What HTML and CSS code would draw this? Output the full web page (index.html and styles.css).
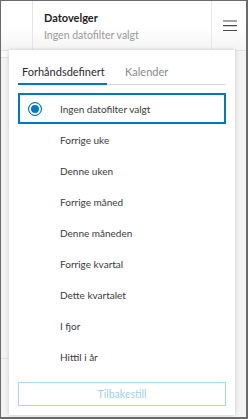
FILE: index.html
```html
<!DOCTYPE html>
<html lang="no">
<head>
<meta charset="utf-8">
<link rel="stylesheet" href="styles.css">
</head>
<body>
<div class="frame">
  <header class="header">
    <div class="cell-left"></div>
    <div class="cell-main">
      <div class="title">Datovelger</div>
      <div class="subtitle">Ingen datofilter valgt</div>
    </div>
    <div class="cell-right">
      <svg width="14" height="12" viewBox="0 0 14 12" class="menu">
        <path d="M0 1H14M0 5.7H14M0 10.5H14" stroke="#4a4a4a" stroke-width="1.2" fill="none"/>
      </svg>
    </div>
  </header>
  <div class="content">
    <div class="bg-row"></div>
    <div class="bg-row bg-row2"></div>
  </div>
  <div class="panel">
    <div class="tabs">
      <div class="tab active">Forhåndsdefinert</div>
      <div class="tab">Kalender</div>
    </div>
    <ul class="options">
      <li class="option selected"><span class="radio"></span>Ingen datofilter valgt</li>
      <li class="option">Forrige uke</li>
      <li class="option">Denne uken</li>
      <li class="option">Forrige måned</li>
      <li class="option">Denne måneden</li>
      <li class="option">Forrige kvartal</li>
      <li class="option">Dette kvartalet</li>
      <li class="option">I fjor</li>
      <li class="option">Hittil i år</li>
    </ul>
    <button class="reset">Tilbakestill</button>
  </div>
</div>
</body>
</html>
```

FILE: styles.css
```css
* { box-sizing: border-box; }
html, body { margin: 0; padding: 0; }
body {
  width: 248px;
  height: 419px;
  overflow: hidden;
  font-family: Lato, "Open Sans", sans-serif;
  background: #6b6b6b;
}
.frame {
  position: relative;
  margin: 1px 2px 2px 1px;
  width: 245px;
  height: 416px;
  background: #f3f3f3;
  display: flex;
  flex-direction: column;
}
.header {
  height: 50px;
  display: flex;
  background: linear-gradient(#ffffff 55%, #f4f4f4);
  border-bottom: 1px solid #e2e2e2;
}
.cell-left {
  width: 32px;
  border-right: 1px solid #e4e4e4;
}
.cell-main {
  flex: 1;
  padding: 9px 0 0 11px;
  border-right: 1px solid #e8e8e8;
}
.title {
  font-size: 11px;
  font-weight: 700;
  color: #1e1e1e;
  line-height: 15px;
}
.subtitle {
  font-size: 10.5px;
  color: #9a9a9a;
  line-height: 15px;
  margin-top: 3px;
}
.cell-right {
  width: 34px;
  display: flex;
  align-items: center;
  justify-content: center;
  padding-left: 1px;
}
.menu { display: block; }
.content {
  flex: 1;
  position: relative;
}
.bg-row {
  height: 7px;
  width: 26px;
  background: #fafafa;
  border-bottom: 1px solid #e2e2e2;
  border-right: 1px solid #e2e2e2;
}
.bg-row2 {
  margin-top: 300px;
  height: 1px;
  width: 8px;
  border: 0;
  background: #e2e2e2;
}
.panel {
  position: absolute;
  left: 8px;
  top: 49px;
  width: 226px;
  height: 365px;
  background: #ffffff;
  box-shadow: 0 0 4px rgba(0,0,0,0.18);
  padding: 12px 9px 9px 9px;
  display: flex;
  flex-direction: column;
}
.tabs {
  display: flex;
  border-bottom: 1px solid #d8d8d8;
  height: 23px;
}
.tab {
  font-size: 11px;
  color: #8a8a8a;
  padding: 3px 0 0 4px;
  height: 23px;
}
.tab.active {
  color: #2b2b2b;
  width: 89px;
  border-bottom: 2px solid #0079c1;
  margin-right: 14px;
}
.options {
  list-style: none;
  margin: 8px 0 0 0;
  padding: 0;
}
.option {
  height: 31px;
  display: flex;
  align-items: center;
  padding-left: 40px;
  font-size: 10px;
  color: #3a3a3a;
  border: 2px solid transparent;
}
.option.selected {
  border-color: #0079c1;
  padding-left: 8px;
  height: 31px;
}
.radio {
  width: 14px;
  height: 14px;
  border-radius: 50%;
  border: 1.5px solid #0079c1;
  margin-right: 18px;
  box-shadow: inset 0 0 0 2px #fff;
  background: #0079c1;
}
.reset {
  margin-top: auto;
  height: 24px;
  width: 100%;
  background: #ffffff;
  border: 1px solid #a6d6f0;
  color: #9fcfee;
  font-family: Lato, "Open Sans", sans-serif;
  font-size: 10.5px;
  padding: 0;
}
```
